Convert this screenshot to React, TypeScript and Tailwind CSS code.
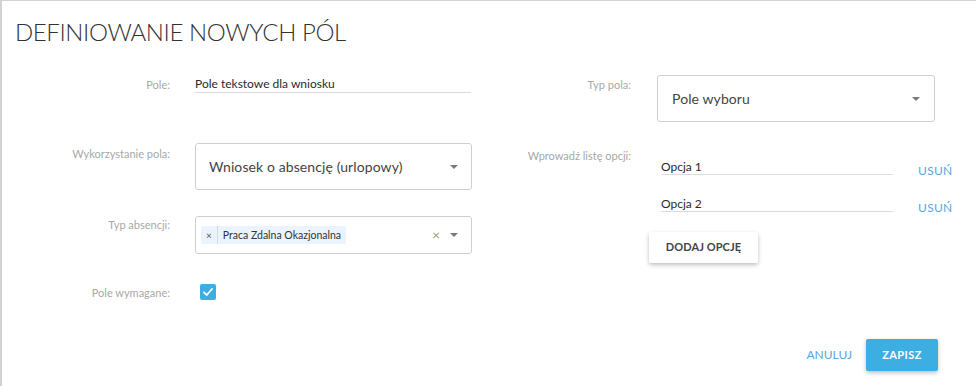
const Caret = () => (
  <span className="w-0 h-0 border-l-[4px] border-r-[4px] border-t-[4px] border-l-transparent border-r-transparent border-t-[#7a7a7a]"></span>
);

const Label = ({ children, className = "" }: { children: React.ReactNode; className?: string }) => (
  <div className={`text-right text-[11px] leading-[16px] text-[#a8a8a8] ${className}`}>{children}</div>
);

const OptionRow = ({ value, className = "" }: { value: string; className?: string }) => (
  <div className={`flex items-start h-[16px] ${className}`}>
    <div className="ml-[4px] w-[232px] border-b border-[#dcdcdc] text-[12px] leading-[15px] text-[#2a2a2a]">{value}</div>
    <button className="ml-[25px] mt-[4px] text-[12px] leading-[16px] tracking-[0.3px] text-[#5aa5dd]">USUŃ</button>
  </div>
);

export default function App() {
  return (
    <div className="w-[976px] h-[386px] bg-white border-t border-l-2 border-[#d2d2d2] font-['Lato',sans-serif] overflow-hidden">
      {/* Header */}
      <h1 className="pl-[13px] pt-[15px] text-[24px] leading-[32px] font-light text-[#333] tracking-[-0.4px]">DEFINIOWANIE NOWYCH PÓL</h1>

      <div className="flex mt-[28px]">
        {/* Left column */}
        <div className="w-[486px] flex flex-col">
          <div className="flex items-start">
            <Label className="w-[168px] pt-[1px]">Pole:</Label>
            <div className="ml-[25px] w-[276px] border-b border-[#dcdcdc] text-[12px] leading-[16px] text-[#2a2a2a]">Pole tekstowe dla wniosku</div>
          </div>

          <div className="flex items-start mt-[50px]">
            <Label className="w-[168px] pt-[3px]">Wykorzystanie pola:</Label>
            <div className="ml-[25px] w-[277px] h-[47px] rounded-[3px] border border-[#cfcfcf] flex items-center justify-between pl-[13px] pr-[13px]">
              <span className="text-[14px] text-[#444] tracking-[0.1px]">Wniosek o absencję (urlopowy)</span>
              <Caret />
            </div>
          </div>

          <div className="flex items-start mt-[26px]">
            <Label className="w-[168px] pt-[1px]">Typ absencji:</Label>
            <div className="ml-[25px] w-[277px] h-[38px] rounded-[3px] border border-[#cfcfcf] flex items-center pl-[5px] pr-[13px]">
              <div className="flex items-center h-[18px] bg-[#ebf4fd] rounded-[2px]">
                <span className="px-[5px] text-[10px] text-[#555] leading-[18px]">×</span>
                <span className="h-[18px] w-px bg-[#c8e0f5]"></span>
                <span className="pl-[5px] pr-[5px] text-[10.5px] text-[#333] leading-[18px]">Praca Zdalna Okazjonalna</span>
              </div>
              <span className="ml-auto text-[14px] leading-[14px] text-[#999]">×</span>
              <span className="ml-[10px] flex"><Caret /></span>
            </div>
          </div>

          <div className="flex items-start mt-[30px]">
            <Label className="w-[168px] pt-[1px]">Pole wymagane:</Label>
            <div className="ml-[30px] w-[16px] h-[16px] rounded-[2px] bg-[#3daee2] flex items-center justify-center">
              <svg width="12" height="12" viewBox="0 0 12 12" fill="none">
                <path d="M2 6.3 L4.8 9 L10 3" stroke="white" strokeWidth="1.8" strokeLinecap="round" strokeLinejoin="round" />
              </svg>
            </div>
          </div>
        </div>

        {/* Right column */}
        <div className="flex flex-col">
          <div className="flex items-start -mt-px">
            <Label className="w-[143px] pt-[2px]">Typ pola:</Label>
            <div className="ml-[26px] w-[278px] h-[47px] rounded-[3px] border border-[#cfcfcf] flex items-center justify-between pl-[14px] pr-[14px]">
              <span className="text-[14px] text-[#444] tracking-[0.1px]">Pole wyboru</span>
              <Caret />
            </div>
          </div>

          <div className="flex items-start mt-[26px]">
            <Label className="w-[143px]">Wprowadź listę opcji:</Label>
            <div className="ml-[26px] flex flex-col">
              <OptionRow value="Opcja 1" className="mt-[11px]" />
              <OptionRow value="Opcja 2" className="mt-[21px]" />
              <button className="-ml-[8px] mt-[20px] w-[109px] h-[31px] rounded-[2px] bg-white shadow-[0_2px_4px_rgba(0,0,0,0.25)] text-[11px] font-bold tracking-[0.1px] text-[#444]">DODAJ OPCJĘ</button>
            </div>
          </div>
        </div>
      </div>

      {/* Footer */}
      <div className="flex items-center justify-end pr-[38px] mt-[38px]">
        <button className="text-[12px] text-[#5aa5dd]">ANULUJ</button>
        <button className="ml-[14px] w-[72px] h-[32px] rounded-[2px] bg-[#3daee2] shadow-[0_2px_4px_rgba(0,0,0,0.25)] text-white text-[11px] font-bold tracking-[0.4px]">ZAPISZ</button>
      </div>
    </div>
  );
}
